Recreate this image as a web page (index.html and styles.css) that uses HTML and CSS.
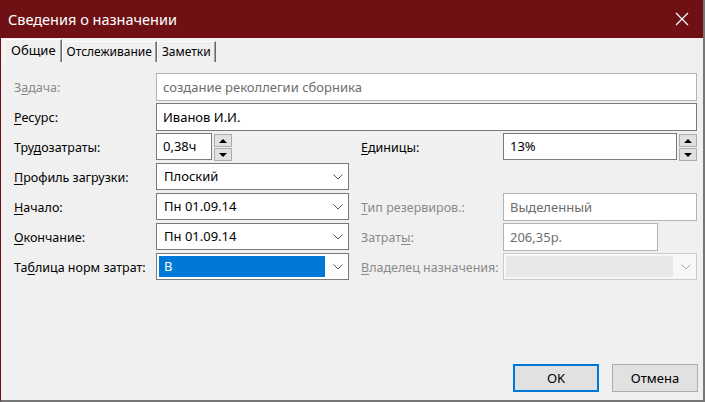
FILE: index.html
```html
<!DOCTYPE html>
<html lang="ru">
<head>
<meta charset="utf-8">
<link rel="stylesheet" href="styles.css">
</head>
<body>
<div class="window">
  <div class="titlebar">
    <span class="title">Сведения о назначении</span>
    <svg class="close" width="14" height="14" viewBox="0 0 14 14"><path d="M1 1 L13 13 M13 1 L1 13" stroke="#fff" stroke-width="1.2" fill="none"/></svg>
  </div>
  <div class="tabs">
    <div class="tab active">Общие</div>
    <div class="tab">Отслеживание</div>
    <div class="tab">Заметки</div>
  </div>
  <div class="form">
    <label class="lbl disabled">З<u>а</u>дача:</label>
    <div class="field wide"><div class="input disabled-input">создание реколлегии сборника</div></div>

    <label class="lbl"><u>Р</u>есурс:</label>
    <div class="field wide"><div class="input">Иванов И.И.</div></div>

    <label class="lbl">Тру<u>д</u>озатраты:</label>
    <div class="field spin-row">
      <div class="input small">0,38ч</div>
      <div class="spinner"><div class="sbtn"><span class="up"></span></div><div class="sbtn"><span class="down"></span></div></div>
    </div>
    <span></span>
    <label class="lbl"><u>Е</u>диницы:</label>
    <div class="field spin-row">
      <div class="input units">13%</div>
      <div class="spinner"><div class="sbtn"><span class="up"></span></div><div class="sbtn"><span class="down"></span></div></div>
    </div>

    <label class="lbl"><u>П</u>рофиль загрузки:</label>
    <div class="field"><div class="select"><span class="val">Плоский</span><svg class="chev" width="10" height="6" viewBox="0 0 10 6"><path d="M0.5 0.5 L5 5 L9.5 0.5" stroke="#555" fill="none"/></svg></div></div>
    <span></span><span></span><span></span>

    <label class="lbl"><u>Н</u>ачало:</label>
    <div class="field"><div class="select"><span class="val">Пн 01.09.14</span><svg class="chev" width="10" height="6" viewBox="0 0 10 6"><path d="M0.5 0.5 L5 5 L9.5 0.5" stroke="#555" fill="none"/></svg></div></div>
    <span></span>
    <label class="lbl disabled"><u>Т</u>ип резервиров.:</label>
    <div class="field"><div class="input disabled-input">Выделенный</div></div>

    <label class="lbl"><u>О</u>кончание:</label>
    <div class="field"><div class="select"><span class="val">Пн 01.09.14</span><svg class="chev" width="10" height="6" viewBox="0 0 10 6"><path d="M0.5 0.5 L5 5 L9.5 0.5" stroke="#555" fill="none"/></svg></div></div>
    <span></span>
    <label class="lbl disabled">Затрат<u>ы</u>:</label>
    <div class="field"><div class="input disabled-input cost">206,35р.</div></div>

    <label class="lbl">Та<u>б</u>лица норм затрат:</label>
    <div class="field"><div class="select"><span class="val selected">В</span><svg class="chev" width="10" height="6" viewBox="0 0 10 6"><path d="M0.5 0.5 L5 5 L9.5 0.5" stroke="#555" fill="none"/></svg></div></div>
    <span></span>
    <label class="lbl disabled"><u>В</u>ладелец назначения:</label>
    <div class="field"><div class="select disabled-select"><span class="val"></span><svg class="chev" width="10" height="6" viewBox="0 0 10 6"><path d="M0.5 0.5 L5 5 L9.5 0.5" stroke="#aaa" fill="none"/></svg></div></div>
  </div>
  <div class="buttons">
    <button class="btn default">OK</button>
    <button class="btn">Отмена</button>
  </div>
</div>
</body>
</html>
```
FILE: styles.css
```css
* { box-sizing: border-box; }
html, body { margin: 0; padding: 0; }
body {
  width: 705px;
  height: 402px;
  overflow: hidden;
  font-family: "Noto Sans", "Open Sans", sans-serif;
  font-size: 12px;
  color: #000;
  background: #f0f0f0;
}
.window {
  width: 705px;
  height: 402px;
  display: flex;
  flex-direction: column;
  background: #f0f0f0;
  border-left: 1px solid #6f1114;
  border-right: 2px solid #777;
  border-bottom: 2px solid #777;
}
.titlebar {
  height: 38px;
  flex: none;
  background: #6f1114;
  display: flex;
  align-items: center;
  justify-content: space-between;
  padding: 0 14px 0 8px;
  margin-left: -1px;
}
.title {
  color: #fff;
  font-size: 14.5px;
}
.close { display: block; }
.tabs {
  display: flex;
  align-items: flex-end;
  height: 24px;
  padding: 0 0 0 3px;
  flex: none;
}
.tab {
  height: 21px;
  line-height: 19px;
  padding: 0 4px;
  border-top: 1px solid #fff;
  border-left: 1px solid #fff;
  border-right: 1px solid #6a6a6a;
  box-shadow: inset -1px 0 0 #a0a0a0;
  font-size: 12px;
}
.tab.active {
  height: 23px;
  line-height: 21px;
  padding: 0 5px 0 6px;
  font-size: 13px;
}
.form {
  display: grid;
  grid-template-columns: 142px 193px 12px 142px 194px;
  grid-auto-rows: 30px;
  padding: 11px 0 0 13px;
  flex: none;
}
.lbl {
  align-self: center;
  font-size: 12.5px;
  padding-bottom: 2px;
}
.lbl.disabled { color: #8a8a8a; }
.lbl u { text-decoration-thickness: 1px; text-underline-offset: 2px; }
.field { display: flex; align-items: flex-start; }
.field.wide { grid-column: 2 / 6; }
.input {
  width: 100%;
  height: 28px;
  background: #fff;
  border: 1px solid #7a7a7a;
  padding: 0 6px;
  line-height: 26px;
  font-size: 13px;
  white-space: nowrap;
}
.disabled-input {
  border-color: #b4b4b4;
  color: #6d6d6d;
}
.input.small { width: 56px; height: 27px; line-height: 25px; flex: none; }
.input.units { width: 174px; height: 27px; line-height: 25px; flex: none; }
.input.cost { width: 155px; }
.spin-row { gap: 2px; padding-top: 1px; }
.spin-row .input { margin-top: -1px; }
.spinner {
  width: 18px;
  height: 27px;
  display: flex;
  flex-direction: column;
  justify-content: space-between;
  flex: none;
}
.sbtn {
  height: 13px;
  background: #e1e1e1;
  border: 1px solid #adadad;
  display: flex;
  align-items: center;
  justify-content: center;
}
.up {
  width: 0; height: 0;
  border-left: 4px solid transparent;
  border-right: 4px solid transparent;
  border-bottom: 4px solid #000;
}
.down {
  width: 0; height: 0;
  border-left: 4px solid transparent;
  border-right: 4px solid transparent;
  border-top: 4px solid #000;
}
.select {
  width: 100%;
  height: 27px;
  background: #fff;
  border: 1px solid #7a7a7a;
  display: flex;
  align-items: center;
  padding: 2px 5px 2px 2px;
  font-size: 13px;
}
.select .val {
  flex: 1;
  height: 100%;
  line-height: 21px;
  padding-left: 5px;
  margin-right: 8px;
}
.select .val.selected {
  background: #0078d7;
  color: #fff;
}
.disabled-select {
  border-color: #cccccc;
  background: #f7f7f7;
}
.disabled-select .val { background: #e8e8e8; }
.chev { flex: none; display: block; }
.buttons {
  margin-top: auto;
  display: flex;
  justify-content: flex-end;
  gap: 13px;
  padding: 0 5px 8px 0;
}
.btn {
  width: 86px;
  height: 28px;
  background: #e1e1e1;
  border: 1px solid #adadad;
  font-family: "Noto Sans", "Open Sans", sans-serif;
  font-size: 13px;
  color: #000;
  padding: 0;
}
.btn.default { border: 2px solid #0078d7; }
```
